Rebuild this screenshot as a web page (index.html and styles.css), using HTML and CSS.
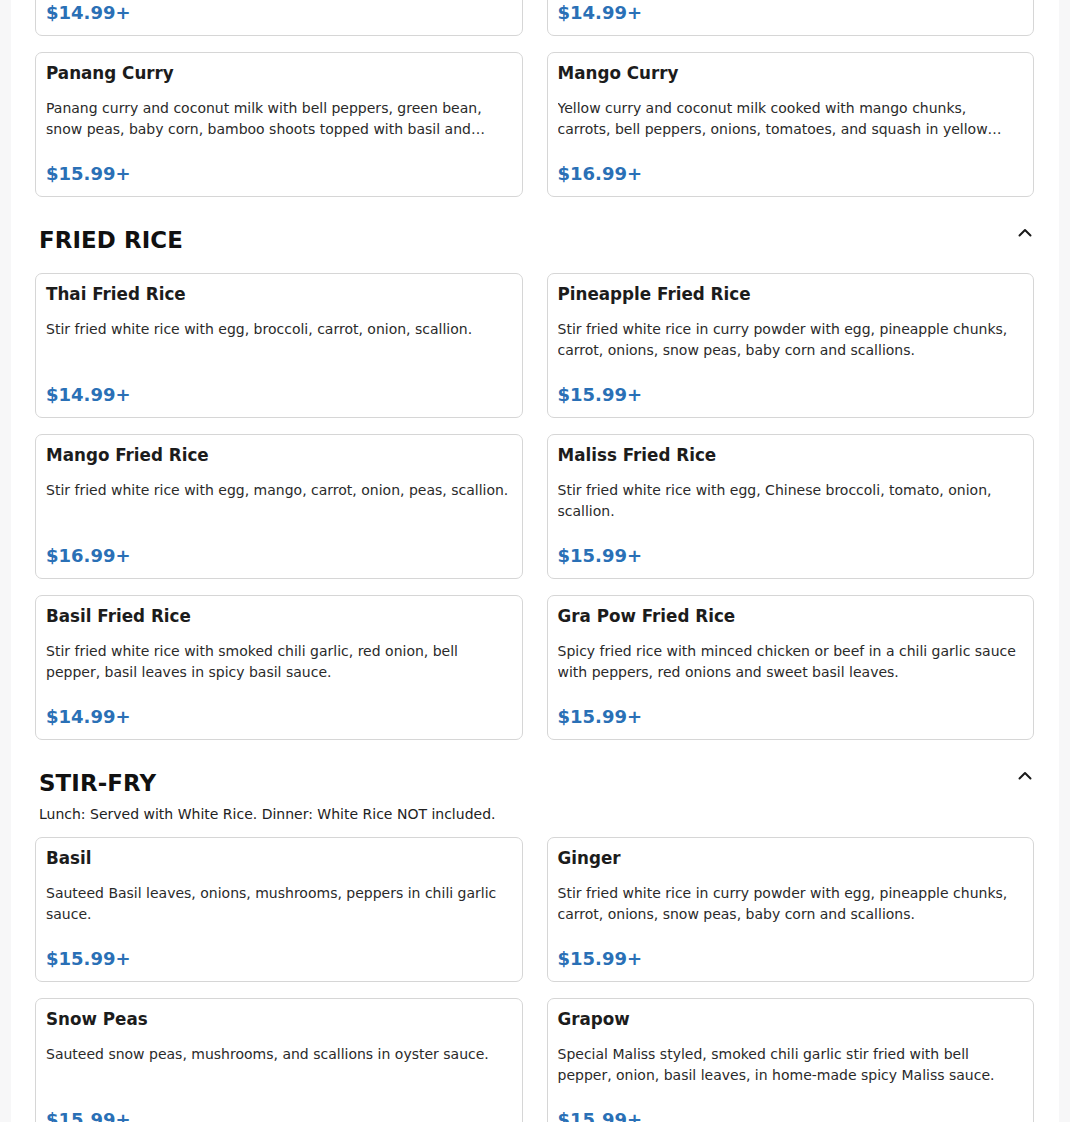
FILE: index.html
```html
<!DOCTYPE html>
<html lang="en">
<head>
<meta charset="utf-8">
<title>Menu</title>
<link rel="stylesheet" href="styles.css">
</head>
<body>
<main class="menu">
  <section class="section section-scrolled">
    <div class="grid">
      <article class="card">
        <h3 class="card-title">Green Curry</h3>
        <p class="card-desc">Green curry and coconut milk with bamboo shoots, bell peppers, eggplant, green beans and basil leaves.</p>
        <div class="card-price">$14.99+</div>
      </article>
      <article class="card">
        <h3 class="card-title">Red Curry</h3>
        <p class="card-desc">Red curry and coconut milk with bamboo shoots, bell peppers, eggplant and basil leaves.</p>
        <div class="card-price">$14.99+</div>
      </article>
      <article class="card">
        <h3 class="card-title">Panang Curry</h3>
        <p class="card-desc">Panang curry and coconut milk with bell peppers, green bean, snow peas, baby corn, bamboo shoots topped with basil and kaffir lime leaves.</p>
        <div class="card-price">$15.99+</div>
      </article>
      <article class="card">
        <h3 class="card-title">Mango Curry</h3>
        <p class="card-desc">Yellow curry and coconut milk cooked with mango chunks, carrots, bell peppers, onions, tomatoes, and squash in yellow curry sauce.</p>
        <div class="card-price">$16.99+</div>
      </article>
    </div>
  </section>

  <section class="section">
    <header class="section-head">
      <h2 class="section-title">FRIED RICE</h2>
      <svg class="chevron" viewBox="0 0 16 16" width="16" height="16" aria-hidden="true"><path d="M2.5 10.5 L8 5 L13.5 10.5" fill="none" stroke="#1a1a1a" stroke-width="2" stroke-linecap="round" stroke-linejoin="round"/></svg>
    </header>
    <div class="grid">
      <article class="card">
        <h3 class="card-title">Thai Fried Rice</h3>
        <p class="card-desc">Stir fried white rice with egg, broccoli, carrot, onion, scallion.</p>
        <div class="card-price">$14.99+</div>
      </article>
      <article class="card">
        <h3 class="card-title">Pineapple Fried Rice</h3>
        <p class="card-desc">Stir fried white rice in curry powder with egg, pineapple chunks, carrot, onions, snow peas, baby corn and scallions.</p>
        <div class="card-price">$15.99+</div>
      </article>
      <article class="card">
        <h3 class="card-title">Mango Fried Rice</h3>
        <p class="card-desc">Stir fried white rice with egg, mango, carrot, onion, peas, scallion.</p>
        <div class="card-price">$16.99+</div>
      </article>
      <article class="card">
        <h3 class="card-title">Maliss Fried Rice</h3>
        <p class="card-desc">Stir fried white rice with egg, Chinese broccoli, tomato, onion, scallion.</p>
        <div class="card-price">$15.99+</div>
      </article>
      <article class="card">
        <h3 class="card-title">Basil Fried Rice</h3>
        <p class="card-desc">Stir fried white rice with smoked chili garlic, red onion, bell pepper, basil leaves in spicy basil sauce.</p>
        <div class="card-price">$14.99+</div>
      </article>
      <article class="card">
        <h3 class="card-title">Gra Pow Fried Rice</h3>
        <p class="card-desc">Spicy fried rice with minced chicken or beef in a chili garlic sauce with peppers, red onions and sweet basil leaves.</p>
        <div class="card-price">$15.99+</div>
      </article>
    </div>
  </section>

  <section class="section">
    <header class="section-head has-note">
      <h2 class="section-title">STIR-FRY</h2>
      <svg class="chevron" viewBox="0 0 16 16" width="16" height="16" aria-hidden="true"><path d="M2.5 10.5 L8 5 L13.5 10.5" fill="none" stroke="#1a1a1a" stroke-width="2" stroke-linecap="round" stroke-linejoin="round"/></svg>
    </header>
    <p class="section-note">Lunch: Served with White Rice. Dinner: White Rice NOT included.</p>
    <div class="grid">
      <article class="card">
        <h3 class="card-title">Basil</h3>
        <p class="card-desc">Sauteed Basil leaves, onions, mushrooms, peppers in chili garlic sauce.</p>
        <div class="card-price">$15.99+</div>
      </article>
      <article class="card">
        <h3 class="card-title">Ginger</h3>
        <p class="card-desc">Stir fried white rice in curry powder with egg, pineapple chunks, carrot, onions, snow peas, baby corn and scallions.</p>
        <div class="card-price">$15.99+</div>
      </article>
      <article class="card">
        <h3 class="card-title">Snow Peas</h3>
        <p class="card-desc">Sauteed snow peas, mushrooms, and scallions in oyster sauce.</p>
        <div class="card-price">$15.99+</div>
      </article>
      <article class="card">
        <h3 class="card-title">Grapow</h3>
        <p class="card-desc">Special Maliss styled, smoked chili garlic stir fried with bell pepper, onion, basil leaves, in home-made spicy Maliss sauce.</p>
        <div class="card-price">$15.99+</div>
      </article>
    </div>
  </section>
</main>
</body>
</html>
```

FILE: styles.css
```css
* {
  box-sizing: border-box;
}

html, body {
  margin: 0;
  padding: 0;
}

body {
  background: #f7f7f8;
  font-family: "DejaVu Sans", "Liberation Sans", sans-serif;
  color: #222;
  overflow: hidden;
}

.menu {
  width: 1048px;
  margin: 0 auto;
  background: #ffffff;
  padding: 0 25px 40px 24px;
  min-height: 1200px;
}

.section-scrolled {
  margin-top: -109px;
}

.section + .section {
  padding-top: 29px;
}

.section-head {
  display: flex;
  justify-content: space-between;
  align-items: flex-start;
  padding-left: 4px;
  margin-bottom: 19px;
}

.section-head.has-note {
  margin-bottom: 0;
}

.section-title {
  margin: 0;
  font-size: 22.9px;
  line-height: 28px;
  font-weight: 700;
  color: #111;
  letter-spacing: 0.1px;
}

.chevron {
  display: block;
  margin-top: -1px;
  margin-right: 1px;
}

.section-note {
  margin: 7px 0 12px;
  padding-left: 4px;
  font-size: 14px;
  line-height: 21px;
  color: #222;
}

.grid {
  display: grid;
  grid-template-columns: 1fr 1fr;
  column-gap: 24px;
  row-gap: 16px;
}

.card {
  border: 1px solid #d6d6d6;
  border-radius: 7px;
  padding: 10px 13px 9px 10px;
  height: 145px;
  background: #fff;
  display: flex;
  flex-direction: column;
}

.card-title {
  margin: 0 0 15px;
  font-size: 16.75px;
  line-height: 20px;
  font-weight: 700;
  color: #1c1c1c;
}

.card-desc {
  margin: 0;
  font-size: 14px;
  line-height: 21px;
  height: 42px;
  color: #2a2a2a;
  display: -webkit-box;
  -webkit-line-clamp: 2;
  -webkit-box-orient: vertical;
  overflow: hidden;
}

.card-price {
  margin-top: 20px;
  font-size: 18px;
  line-height: 27px;
  font-weight: 700;
  color: #2a70b6;
}
```
